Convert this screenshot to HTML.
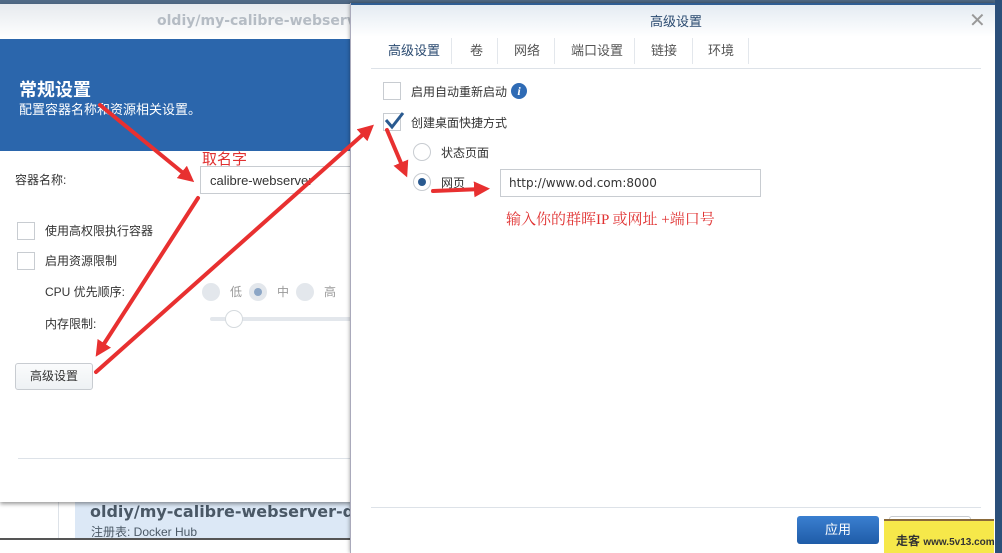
<!DOCTYPE html>
<html><head><meta charset="utf-8"><style>
*{margin:0;padding:0;box-sizing:border-box}
body{width:1002px;height:553px;position:relative;overflow:hidden;background:#fff;font-family:"Liberation Sans","Noto Sans CJK SC",sans-serif;font-size:12px;color:#333}
.a{position:absolute}
.cb{position:absolute;width:18px;height:18px;border:1px solid #c8ccd1;background:#fff}
.rd{position:absolute;width:18px;height:18px;border-radius:50%;border:1px solid #c8ccd1;background:#fff}
</style></head><body>
<div class="a" style="left:0;top:0;width:1002px;height:4px;background:#506a86"></div>
<div class="a" style="left:0;top:500px;width:360px;height:39px;background:#fff"></div>
<div class="a" style="left:58px;top:500px;width:1px;height:39px;background:#dde2e8"></div>
<div class="a" style="left:75px;top:500px;width:290px;height:39px;background:#dce8f6"></div>
<div class="a" style="left:90px;top:502px;font-size:16px;font-weight:bold;color:#4a5866;font-family:'DejaVu Sans',sans-serif">oldiy/my-calibre-webserver-do</div>
<div class="a" style="left:91px;top:523px;color:#4a5866">注册表: Docker Hub</div>
<div class="a" style="left:0;top:538px;width:360px;height:2px;background:#555"></div>
<div class="a" style="left:0;top:4px;width:352px;height:498px;background:#fff;box-shadow:0 2px 4px rgba(0,0,0,.4)">
 <div class="a" style="left:0;top:0;width:352px;height:35px;background:linear-gradient(#e6eaee,#fff)"></div>
 <div class="a" style="left:157px;top:9px;font-size:14px;font-weight:bold;color:#b5bcc4;font-family:'DejaVu Sans',sans-serif;white-space:nowrap">oldiy/my-calibre-webserve</div>
 <div class="a" style="left:0;top:35px;width:352px;height:112px;background:#2b66ac"></div>
 <div class="a" style="left:19px;top:72px;font-size:18px;font-weight:bold;color:#fff">常规设置</div>
 <div class="a" style="left:19px;top:95px;font-size:13px;color:#fff">配置容器名称和资源相关设置。</div>
 <div class="a" style="left:15px;top:167px;color:#333">容器名称:</div>
 <div class="a" style="left:200px;top:162px;width:152px;height:28px;border:1px solid #c8ccd1;padding:6px 9px;font-size:13px">calibre-webserver</div>
 <div class="cb" style="left:17px;top:218px"></div><div class="a" style="left:45px;top:218px">使用高权限执行容器</div>
 <div class="cb" style="left:17px;top:248px"></div><div class="a" style="left:45px;top:248px">启用资源限制</div>
 <div class="a" style="left:45px;top:279px">CPU 优先顺序:</div>
 <div class="rd" style="left:202px;top:279px;background:#e3e7ec;border-color:#e3e7ec"></div><div class="a" style="left:230px;top:279px;color:#999">低</div>
 <div class="rd" style="left:249px;top:279px;background:#e3e7ec;border-color:#e3e7ec"><div class="a" style="left:4px;top:4px;width:8px;height:8px;border-radius:50%;background:#8ca6c6"></div></div><div class="a" style="left:277px;top:279px;color:#999">中</div>
 <div class="rd" style="left:296px;top:279px;background:#e3e7ec;border-color:#e3e7ec"></div><div class="a" style="left:324px;top:279px;color:#999">高</div>
 <div class="a" style="left:45px;top:311px">内存限制:</div>
 <div class="a" style="left:210px;top:313px;width:142px;height:4px;background:#e3e7ec;border-radius:2px"></div>
 <div class="rd" style="left:225px;top:306px;border-color:#d5dade"></div>
 <div class="a" style="left:15px;top:359px;width:78px;height:27px;border:1px solid #c8ccd1;border-radius:3px;background:linear-gradient(#fafbfc,#eef1f4);text-align:center;line-height:25px">高级设置</div>
 <div class="a" style="left:18px;top:454px;width:334px;height:1px;background:#dde2e8"></div>
</div>
<div class="a" style="left:350px;top:3px;width:645px;height:550px;background:#fff;border-left:1px solid #aab;box-shadow:0 0 4px rgba(0,0,0,.4)">
 <div class="a" style="left:0;top:0;width:645px;height:2px;background:#2f5d93"></div>
 <div class="a" style="left:0;top:2px;width:645px;height:32px;background:linear-gradient(#e4ebf2,#fff)"></div>
 <div class="a" style="left:299px;top:8px;font-size:13px;color:#2a4a70">高级设置</div>
 <div class="a" style="left:618px;top:5px;font-size:20px;color:#999">✕</div>
 <div class="a" style="left:20px;top:34px;width:610px;height:32px;border-bottom:1px solid #dde2e8"></div>
 <div class="a" style="left:37px;top:37px;font-size:13px;color:#2a4a70">高级设置</div>
 <div class="a" style="left:100px;top:35px;width:1px;height:26px;background:#e3e7ec"></div>
 <div class="a" style="left:119px;top:37px;font-size:13px;color:#555">卷</div>
 <div class="a" style="left:146px;top:35px;width:1px;height:26px;background:#e3e7ec"></div>
 <div class="a" style="left:163px;top:37px;font-size:13px;color:#555">网络</div>
 <div class="a" style="left:203px;top:35px;width:1px;height:26px;background:#e3e7ec"></div>
 <div class="a" style="left:220px;top:37px;font-size:13px;color:#555">端口设置</div>
 <div class="a" style="left:283px;top:35px;width:1px;height:26px;background:#e3e7ec"></div>
 <div class="a" style="left:300px;top:37px;font-size:13px;color:#555">链接</div>
 <div class="a" style="left:341px;top:35px;width:1px;height:26px;background:#e3e7ec"></div>
 <div class="a" style="left:357px;top:37px;font-size:13px;color:#555">环境</div>
 <div class="a" style="left:397px;top:35px;width:1px;height:26px;background:#e3e7ec"></div>
 <div class="cb" style="left:32px;top:79px"></div><div class="a" style="left:60px;top:80px">启用自动重新启动</div>
 <div class="a" style="left:160px;top:80px;width:16px;height:16px;border-radius:50%;background:#2f6bb5;color:#fff;font-size:12px;font-weight:bold;font-style:italic;text-align:center;line-height:16px;font-family:'Liberation Serif',serif">i</div>
 <div class="cb" style="left:32px;top:110px"></div>
 <svg class="a" style="left:32px;top:106px" width="22" height="22"><path d="M3 11 L9 18 L20 4" stroke="#2a5a90" stroke-width="3" fill="none"/></svg>
 <div class="a" style="left:60px;top:111px">创建桌面快捷方式</div>
 <div class="rd" style="left:62px;top:140px"></div><div class="a" style="left:90px;top:141px">状态页面</div>
 <div class="rd" style="left:62px;top:170px"><div class="a" style="left:4px;top:4px;width:8px;height:8px;border-radius:50%;background:#2a5a90"></div></div><div class="a" style="left:90px;top:171px">网页</div>
 <div class="a" style="left:149px;top:166px;width:261px;height:28px;border:1px solid #c8ccd1;padding:6px 8px;font-family:'DejaVu Sans',sans-serif;font-size:12px">http://www.od.com:8000</div>
 <div class="a" style="left:155px;top:205px;font-size:15px;color:#e03030;font-family:'Liberation Serif','Noto Serif CJK SC',serif;white-space:nowrap">输入你的群晖IP 或网址 +端口号</div>
 <div class="a" style="left:20px;top:504px;width:610px;height:1px;background:#dde2e8"></div>
 <div class="a" style="left:446px;top:513px;width:82px;height:28px;border-radius:3px;background:linear-gradient(#3a7fd0,#1f5ca8);color:#fff;text-align:center;line-height:28px;font-size:13px">应用</div>
 <div class="a" style="left:538px;top:513px;width:82px;height:28px;border:1px solid #c8ccd1;border-radius:3px"></div>
</div>
<div class="a" style="left:884px;top:519px;width:110px;height:34px;background:#f6e84a;border-top:2px solid #8a6a3a;font-size:12px;font-weight:bold;padding:11px 0 0 12px;white-space:nowrap">走客 <span style="font-size:10px">www.5v13.com</span></div>
<div class="a" style="left:995px;top:0;width:7px;height:553px;background:#2b4f7a"></div>
<div class="a" style="left:202px;top:148px;font-size:15px;color:#e03030">取名字</div>
<svg class="a" style="left:0;top:0" width="1002" height="553">
<defs><marker id="h" markerWidth="4" markerHeight="4" refX="2" refY="2" orient="auto"><path d="M0 0 L4 2 L0 4 Z" fill="#e83030"/></marker></defs>
<g stroke="#e83030" fill="none" stroke-linecap="round">
<line x1="100" y1="105" x2="188" y2="177" stroke-width="4" marker-end="url(#h)"/>
<line x1="198" y1="198" x2="100" y2="350" stroke-width="4" marker-end="url(#h)"/>
<line x1="96" y1="372" x2="368" y2="130" stroke-width="4" marker-end="url(#h)"/>
<line x1="387" y1="130" x2="404" y2="170" stroke-width="4" marker-end="url(#h)"/>
<line x1="433" y1="191" x2="482" y2="189" stroke-width="4" marker-end="url(#h)"/>
</g></svg>
</body></html>
